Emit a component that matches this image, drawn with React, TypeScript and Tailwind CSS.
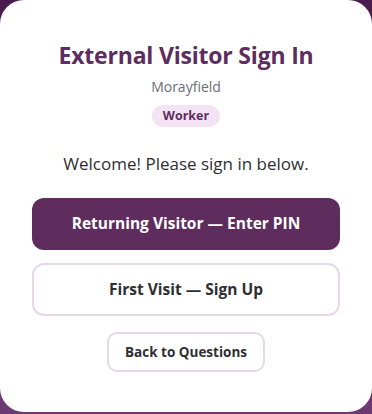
const App = () => {
  return (
    <div
      className="w-[372px] h-[414px] bg-gradient-to-b from-[#4a1c4e] to-[#6c3a70] pb-[2px]"
      style={{ fontFamily: '"Open Sans", "Liberation Sans", sans-serif' }}
    >
      <div className="h-full w-full bg-white rounded-[24px] flex flex-col items-center pt-[40px] px-8">
        <h1 className="text-[23px] leading-[30px] font-bold text-[#5c2d5e] tracking-[-0.2px]">
          External Visitor Sign In
        </h1>
        <p className="mt-[8px] text-[14px] leading-[18px] text-[#6b6f76]">Morayfield</p>
        <span className="mt-[9px] h-[22px] px-[11px] flex items-center rounded-full bg-[#f3e3f5] text-[12.5px] font-bold text-[#5c2d5e]">
          Worker
        </span>

        <p className="mt-[26px] text-[17px] leading-[22px] text-[#2f2f33]">
          Welcome! Please sign in below.
        </p>

        {/* Choices */}
        <div className="mt-[23px] w-full flex flex-col gap-[13px]">
          <button className="h-[52px] w-full rounded-[12px] bg-[#5e2d5e] text-white text-[15.5px] font-bold">
            Returning Visitor — Enter PIN
          </button>
          <button className="h-[53px] w-full rounded-[12px] bg-white border-2 border-[#e6d8e7] text-[#2f2f33] text-[15.5px] font-bold">
            First Visit — Sign Up
          </button>
        </div>

        <button className="mt-[16px] h-[40px] px-[16px] rounded-[10px] bg-white border-2 border-[#e6d8e7] text-[#2f2f33] text-[13.5px] font-bold">
          Back to Questions
        </button>
      </div>
    </div>
  );
};

export default App;
